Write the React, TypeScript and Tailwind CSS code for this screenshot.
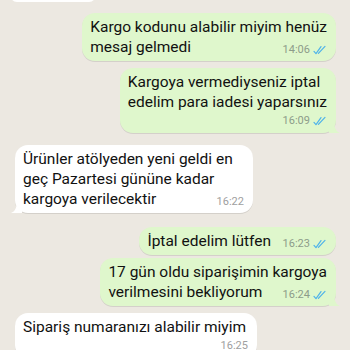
import React from 'react';

interface Msg {
  id: number;
  lines: string[];
  time: string;
  out: boolean;
  tail?: boolean;
  timeBelow?: boolean;
  width?: string;
}

const messages: Msg[] = [
  { id: 1, lines: ['Kargo kodunu alabilir miyim henüz', 'mesaj gelmedi'], time: '14:06', out: true },
  { id: 2, lines: ['Kargoya vermediyseniz iptal', 'edelim para iadesi yaparsınız'], time: '16:09', out: true, tail: true, timeBelow: true },
  { id: 3, lines: ['Ürünler atölyeden yeni geldi en', 'geç Pazartesi gününe kadar', 'kargoya verilecektir'], time: '16:22', out: false, tail: true, width: 'min-w-[238px]' },
  { id: 4, lines: ['İptal edelim lütfen'], time: '16:23', out: true },
  { id: 5, lines: ['17 gün oldu siparişimin kargoya', 'verilmesini bekliyorum'], time: '16:24', out: true, tail: true },
  { id: 6, lines: ['Sipariş numaranızı alabilir miyim'], time: '16:25', out: false, timeBelow: true, width: 'min-w-[242px]' },
];

// double blue ticks
const Ticks = () => (
  <svg width="14" height="10" viewBox="0 0 14 10" fill="none" aria-hidden="true">
    <path d="M1 6.4 L3 8.6 L8 1.6" stroke="#4fb3ea" strokeWidth="1.2" strokeLinecap="round" strokeLinejoin="round" />
    <path d="M5.4 8.4 L12 1.4" stroke="#4fb3ea" strokeWidth="1.2" strokeLinecap="round" />
  </svg>
);

const Time: React.FC<{ msg: Msg }> = ({ msg }) => (
  <span className="flex items-center gap-[3px] text-[11px] leading-[14px]">
    <span className={msg.out ? 'text-[#8d9c8a]' : 'text-[#a0a0a0]'}>{msg.time}</span>
    {msg.out && <Ticks />}
  </span>
);

const Bubble: React.FC<{ msg: Msg }> = ({ msg }) => {
  const spacer = msg.out ? 'w-[56px]' : 'w-[42px]';
  const bg = msg.out ? 'bg-[#dff7cc]' : 'bg-white';
  return (
    <div className={`flex ${msg.out ? 'justify-end' : 'justify-start'}`}>
      <div
        className={`relative rounded-[13px] pl-[8px] pr-[9px] pt-[4px] pb-[4px] shadow-[0_1px_0.5px_rgba(0,0,0,0.1)] ${bg} ${msg.width ?? ''}`}
      >
        <div className="text-[15.5px] leading-[20px] text-[#111] whitespace-nowrap">
          {msg.lines.map((line, i) => (
            <div key={i}>
              {line}
              {!msg.timeBelow && i === msg.lines.length - 1 && (
                <span className={`inline-block h-[8px] ${spacer}`} />
              )}
            </div>
          ))}
        </div>
        {msg.timeBelow ? (
          <div className="flex justify-end pt-[2px] pb-[1px]">
            <Time msg={msg} />
          </div>
        ) : (
          <span className="absolute bottom-[4px] right-[9px]">
            <Time msg={msg} />
          </span>
        )}
        {msg.tail && (
          <svg
            className={`absolute bottom-0 ${msg.out ? 'right-[-5px]' : 'left-[-5px] -scale-x-100'}`}
            width="12"
            height="14"
            viewBox="0 0 12 14"
            aria-hidden="true"
          >
            <path d="M0 0 L0 14 L11 14 C7 12.5 5 9 5 0 Z" fill={msg.out ? '#dff7cc' : '#ffffff'} />
          </svg>
        )}
      </div>
    </div>
  );
};

export default function App() {
  const gaps = ['mt-0', 'mt-[7px]', 'mt-[12px]', 'mt-[14px]', 'mt-[3px]', 'mt-[7px]'];
  return (
    <div
      className="w-[350px] h-[350px] overflow-hidden bg-[#ece8e1]"
      style={{ fontFamily: 'Roboto, "Noto Sans", sans-serif' }}
    >
      <div className="pl-[10px] -mt-[12px]">
        <div className="w-[86px] h-[14px] rounded-[12px] bg-white" />
      </div>
      <div className="flex flex-col pl-[15px] pr-[14px] pt-[11px]">
        {messages.map((m, i) => (
          <div key={m.id} className={gaps[i]}>
            <Bubble msg={m} />
          </div>
        ))}
      </div>
    </div>
  );
}
